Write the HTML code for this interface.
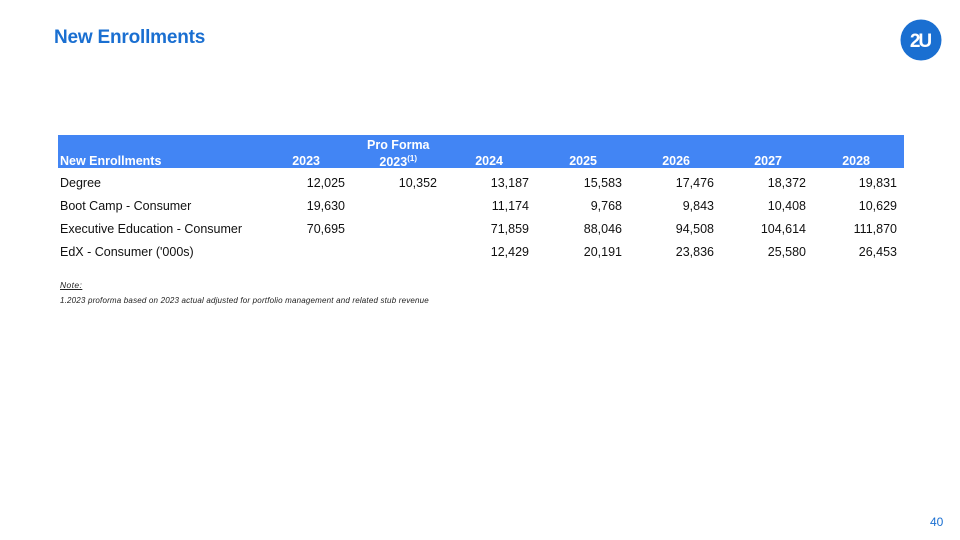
<html><head><style>
body{margin:0;width:960px;height:540px;background:#fff;position:relative;font-family:"Liberation Sans",sans-serif;overflow:hidden}
.a{position:absolute;white-space:nowrap}
.t{left:54px;top:27px;font-size:19px;font-weight:bold;color:#1a6fd1;letter-spacing:-0.2px}
.band{position:absolute;left:58px;top:135px;width:846px;height:33px;background:#4285f4}
.h{color:#fff;font-weight:bold;font-size:12.5px;top:154px}
.r{font-size:12.5px;color:#111}
.n{text-align:right;width:80px}
</style></head><body>
<div class="a t">New Enrollments</div>
<svg class="a" style="left:900px;top:19px" width="42" height="42"><circle cx="21" cy="21" r="20.5" fill="#1a6fd1"/><text x="20" y="28" text-anchor="middle" font-family="Liberation Sans" font-weight="bold" font-size="19" fill="#fff" letter-spacing="-2">2U</text></svg>
<div class="band"></div>
<div class="a h" style="left:367px;top:138px">Pro Forma</div>
<div class="a h" style="left:60px">New Enrollments</div>
<div class="a h n" style="left:240px">2023</div>
<div class="a h n" style="left:337px">2023<sup style="font-size:8px">(1)</sup></div>
<div class="a h n" style="left:423px">2024</div>
<div class="a h n" style="left:517px">2025</div>
<div class="a h n" style="left:610px">2026</div>
<div class="a h n" style="left:702px">2027</div>
<div class="a h n" style="left:790px">2028</div>

<div class="a r" style="left:60px;top:176px">Degree</div>
<div class="a r" style="left:60px;top:199px">Boot Camp - Consumer</div>
<div class="a r" style="left:60px;top:222px">Executive Education - Consumer</div>
<div class="a r" style="left:60px;top:245px">EdX - Consumer ('000s)</div>

<div class="a r n" style="left:265px;top:176px">12,025</div>
<div class="a r n" style="left:357px;top:176px">10,352</div>
<div class="a r n" style="left:449px;top:176px">13,187</div>
<div class="a r n" style="left:542px;top:176px">15,583</div>
<div class="a r n" style="left:634px;top:176px">17,476</div>
<div class="a r n" style="left:726px;top:176px">18,372</div>
<div class="a r n" style="left:817px;top:176px">19,831</div>

<div class="a r n" style="left:265px;top:199px">19,630</div>
<div class="a r n" style="left:449px;top:199px">11,174</div>
<div class="a r n" style="left:542px;top:199px">9,768</div>
<div class="a r n" style="left:634px;top:199px">9,843</div>
<div class="a r n" style="left:726px;top:199px">10,408</div>
<div class="a r n" style="left:817px;top:199px">10,629</div>

<div class="a r n" style="left:265px;top:222px">70,695</div>
<div class="a r n" style="left:449px;top:222px">71,859</div>
<div class="a r n" style="left:542px;top:222px">88,046</div>
<div class="a r n" style="left:634px;top:222px">94,508</div>
<div class="a r n" style="left:726px;top:222px">104,614</div>
<div class="a r n" style="left:817px;top:222px">111,870</div>

<div class="a r n" style="left:449px;top:245px">12,429</div>
<div class="a r n" style="left:542px;top:245px">20,191</div>
<div class="a r n" style="left:634px;top:245px">23,836</div>
<div class="a r n" style="left:726px;top:245px">25,580</div>
<div class="a r n" style="left:817px;top:245px">26,453</div>

<div class="a" style="left:60px;top:280px;font-size:8.5px;font-style:italic;text-decoration:underline;color:#222;letter-spacing:0.4px">Note:</div>
<div class="a" style="left:60px;top:296px;font-size:8px;font-style:italic;color:#222;letter-spacing:0.18px">1.2023 proforma based on 2023 actual adjusted for portfolio management and related stub revenue</div>
<div class="a" style="left:930px;top:515px;font-size:12px;color:#1a6fd1">40</div>
</body></html>
